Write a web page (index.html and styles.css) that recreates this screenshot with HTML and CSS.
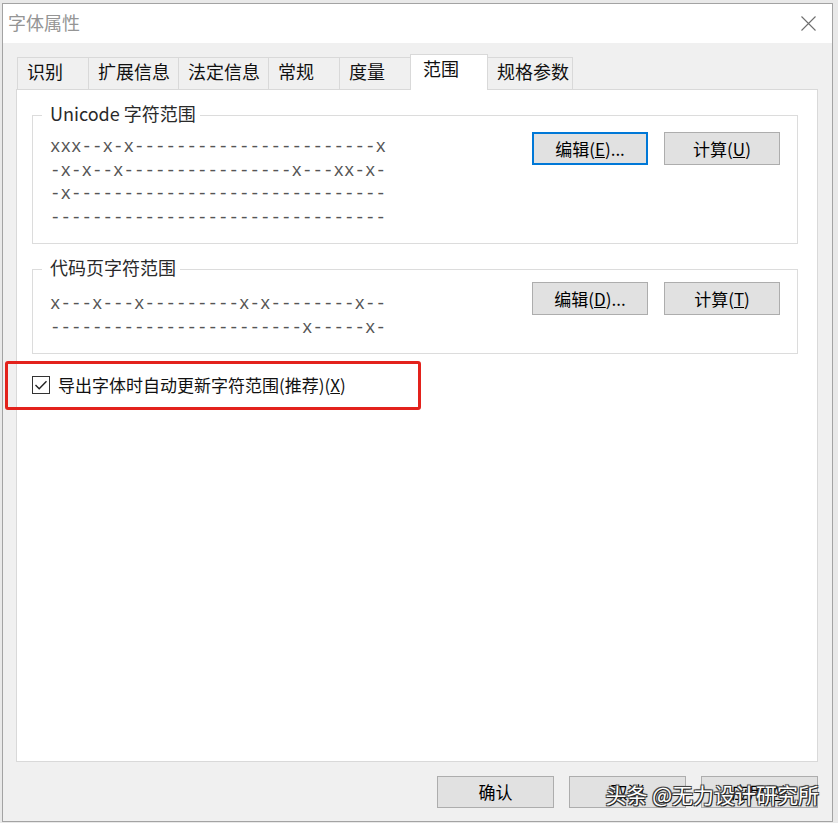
FILE: index.html
```html
<!DOCTYPE html>
<html lang="zh-CN">
<head>
<meta charset="utf-8">
<title>字体属性</title>
<link rel="stylesheet" href="styles.css">
</head>
<body>
<div class="dialog">
  <div class="titlebar">
    <span class="title">字体属性</span>
    <svg class="close" width="15" height="15" viewBox="0 0 15 15"><path d="M0.5 0.5 L14.5 14.5 M14.5 0.5 L0.5 14.5" stroke="#6e6e6e" stroke-width="1.1" fill="none"/></svg>
  </div>
  <div class="client">
    <div class="tabs">
      <div class="tab w2">识别</div>
      <div class="tab w4">扩展信息</div>
      <div class="tab w4">法定信息</div>
      <div class="tab w2">常规</div>
      <div class="tab w2">度量</div>
      <div class="tab active">范围</div>
      <div class="tab w4n">规格参数</div>
    </div>
    <div class="panel">
      <fieldset class="group">
        <legend>Unicode 字符范围</legend>
        <div class="group-body">
<pre class="map">xxx--x-x-----------------------x
-x-x--x----------------x---xx-x-
-x------------------------------
--------------------------------</pre>
          <div class="btns">
            <button class="btn focus">编辑(<u>E</u>)...</button>
            <button class="btn">计算(<u>U</u>)</button>
          </div>
        </div>
      </fieldset>
      <fieldset class="group cp">
        <legend>代码页字符范围</legend>
        <div class="group-body">
<pre class="map">x---x---x---------x-x--------x--
------------------------x-----x-</pre>
          <div class="btns">
            <button class="btn">编辑(<u>D</u>)...</button>
            <button class="btn">计算(<u>T</u>)</button>
          </div>
        </div>
      </fieldset>
      <label class="check-row">
        <span class="checkbox"><svg width="18" height="18" viewBox="0 0 18 18"><rect x="0.5" y="0.5" width="17" height="17" fill="#fff" stroke="#333"/><path d="M3.5 9 L7.2 12.7 L14.5 5.2" stroke="#222" stroke-width="1.4" fill="none"/></svg></span>
        <span class="check-label">导出字体时自动更新字符范围(推荐)(<u>X</u>)</span>
        <span class="highlight"></span>
      </label>
    </div>
    <div class="footer">
      <button class="btn fbtn">确认</button>
      <button class="btn fbtn">取消</button>
      <button class="btn fbtn">应用(<u>A</u>)</button>
      <div class="watermark">头条 @无力设计研究所</div>
    </div>
  </div>
</div>
</body>
</html>
```

FILE: styles.css
```css
html, body {
  margin: 0;
  padding: 0;
}
body {
  background: #e9e9e9;
  font-family: "Noto Sans CJK SC", "Noto Sans", sans-serif;
  width: 838px;
  height: 823px;
  overflow: hidden;
}
.dialog {
  margin: 3px 0 0 2px;
  width: 831px;
  height: 819px;
  box-sizing: border-box;
  border: 1px solid #a3a3a3;
  display: flex;
  flex-direction: column;
  background: #f0f0f0;
}
.titlebar {
  height: 39px;
  flex: none;
  background: #fff;
  display: flex;
  align-items: center;
  justify-content: space-between;
  padding: 0 16px 0 5px;
}
.title {
  font-size: 18px;
  line-height: 24px;
  color: #959595;
  margin-bottom: 3px;
}
.close {
  margin-bottom: 1px;
}
.client {
  flex: 1;
  padding: 14px 14px 0 13px;
  display: flex;
  flex-direction: column;
}
.tabs {
  display: flex;
  align-items: flex-end;
  height: 32px;
  padding-left: 1px;
}
.tab {
  height: 32px;
  box-sizing: border-box;
  border: 1px solid #d9d9d9;
  border-bottom: 0;
  background: #f0f0f0;
  font-size: 18px;
  line-height: 27px;
  padding-left: 9px;
  color: #111;
  margin-right: -1px;
  white-space: nowrap;
}
.w2 { width: 72px; }
.w4 { width: 91px; }
.w4n { width: 86px; }
.tab.active {
  width: 78px;
  height: 36px;
  background: #fff;
  margin-bottom: -1px;
  padding-left: 12px;
  position: relative;
  z-index: 1;
}
.panel {
  height: 673px;
  box-sizing: border-box;
  border: 1px solid #d9d9d9;
  background: #fff;
  padding: 0 19px 0 15px;
}
.group {
  margin: 13px 0 0;
  padding: 5px 17px 13px 17px;
  border: 1px solid #dcdcdc;
  min-width: 0;
}
.group legend {
  font-size: 18px;
  line-height: 20px;
  padding: 0 4px 4px 8px;
  margin-left: -8px;
  color: #2a2a2a;
}
.group-body {
  display: flex;
  justify-content: space-between;
  align-items: flex-start;
}
.map {
  margin: 4px 0 0;
  font-family: "Liberation Mono", monospace;
  font-size: 17.5px;
  line-height: 23.5px;
  color: #555;
}
.btns {
  display: flex;
  gap: 16px;
}
.btn {
  width: 116px;
  height: 33px;
  box-sizing: border-box;
  border: 1px solid #adadad;
  background: #e1e1e1;
  font-family: "Noto Sans CJK SC", "Noto Sans", sans-serif;
  font-size: 17px;
  line-height: 20px;
  color: #000;
  padding: 0;
}
.btn.focus {
  border: 2px solid #0078d7;
}
.group.cp {
  padding-top: 1px;
}
.group.cp .map {
  margin-top: 11px;
}
.check-row {
  display: flex;
  align-items: center;
  gap: 8px;
  margin-top: 21px;
  position: relative;
  font-size: 17px;
  line-height: 20px;
  color: #111;
}
.checkbox {
  width: 18px;
  height: 18px;
  display: block;
}
.checkbox svg { display: block; }
.highlight {
  position: absolute;
  left: -27px;
  top: -14px;
  width: 416px;
  height: 49px;
  box-sizing: border-box;
  border: 3px solid #e3221c;
  border-radius: 3px;
}
.footer {
  margin-top: 14px;
  display: flex;
  justify-content: flex-end;
  gap: 15px;
  position: relative;
}
.fbtn {
  width: 117px;
  height: 32px;
}
.watermark {
  position: absolute;
  right: -1px;
  top: 5px;
  font-size: 21px;
  line-height: 26px;
  color: #fff;
  white-space: nowrap;
  text-shadow: 1px 1px 0 #222, -1px -1px 0 #444, 1px -1px 0 #444, -1px 1px 0 #444, 0 0 2px #000;
}
```
